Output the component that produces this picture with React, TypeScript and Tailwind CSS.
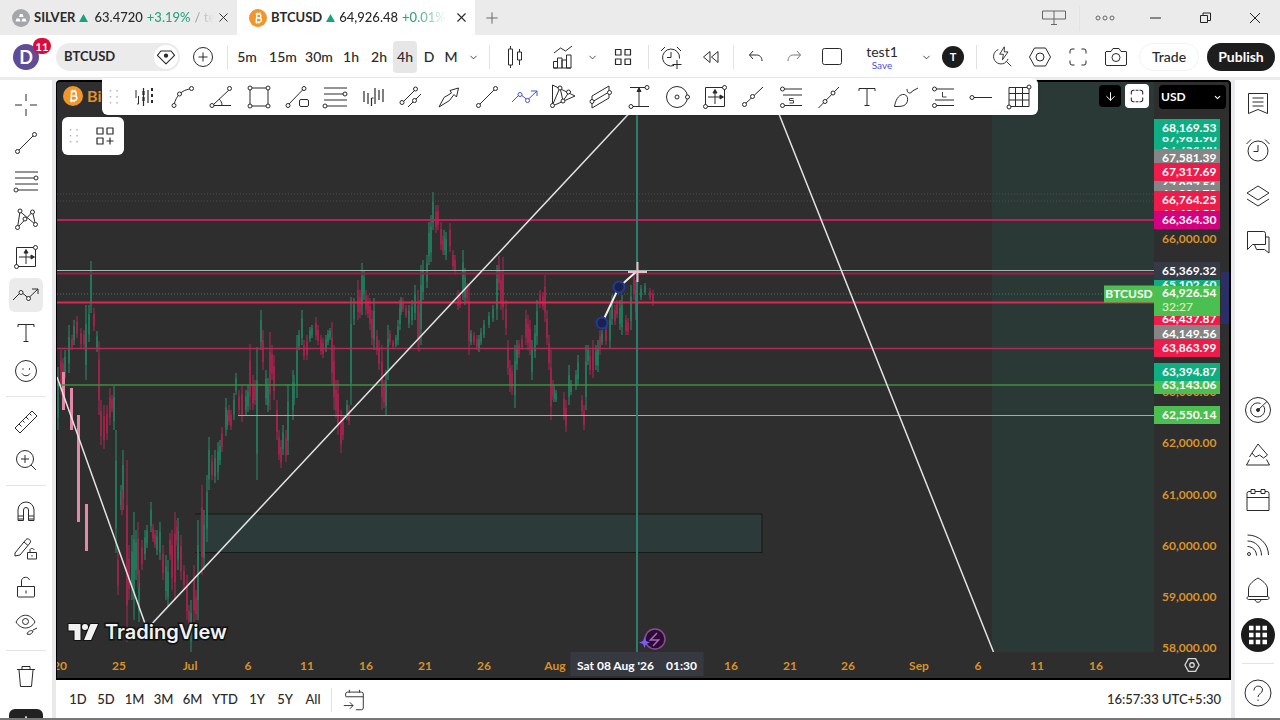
import type { ReactNode } from "react";
import { ArrowDown, ChevronDown, Plus, X } from "lucide-react";

const Icon = ({ children, size = 28, className = "" }: { children: ReactNode; size?: number; className?: string }) => (
  <svg
    viewBox="0 0 28 28"
    width={size}
    height={size}
    fill="none"
    stroke="currentColor"
    strokeWidth={1}
    strokeLinejoin="round"
    className={`shrink-0 ${className}`}
    aria-hidden="true"
  >
    {children}
  </svg>
);

const Dot = ({ x, y }: { x: number; y: number }) => <circle cx={x} cy={y} r={2} fill="#fff" />;

const icons: Record<string, ReactNode> = {
  cross: <path d="M14 3v7M14 18v7M3 14h7M18 14h7" />,
  trend: (
    <>
      <path d="M6 22 22 6" />
      <Dot x={5.5} y={22.5} />
      <Dot x={22.5} y={5.5} />
    </>
  ),
  fib: (
    <>
      <path d="M3 5h23M3 11h20M3 17h23M5 23h21" />
      <Dot x={24} y={11} />
      <Dot x={4} y={23} />
    </>
  ),
  pattern: (
    <>
      <path d="M5.5 22.5 8 6.5 23.5 19.5 20.5 7 5.5 22.5" />
      <Dot x={5.5} y={22.5} />
      <Dot x={8} y={6} />
      <Dot x={13} y={14} />
      <Dot x={20.5} y={7} />
      <Dot x={23.5} y={19.5} />
    </>
  ),
  position: (
    <>
      <path d="M4.5 4.5h19v19h-19zM14 21V8M7 14h13" />
      <path d="m12 10 2-3.5 2 3.5zM19 12l3.5 2-3.5 2z" fill="currentColor" />
      <Dot x={23.5} y={4.5} />
      <Dot x={4.5} y={23.5} />
    </>
  ),
  path: (
    <>
      <path d="m1 19 8-8 7.5 6L26 8M20 8h6v5" />
      <Dot x={9} y={11.5} />
      <Dot x={16.5} y={17.5} />
    </>
  ),
  text: <path d="M6 8V5.5h16V8M14 5.5v17M11.5 22.5h5" />,
  smile: (
    <>
      <circle cx={14} cy={14} r={10.5} />
      <path d="M10 16.5c2 3 6 3 8 0" />
      <path d="M10.5 12h1M17 12h1" strokeWidth={1.5} />
    </>
  ),
  ruler: <path d="M3 20 20 3l5 5L8 25zM7 16l2.5 2.5M10.5 12.5l2 2M14 9l2.5 2.5M17.5 5.5l2 2" />,
  zoom: (
    <>
      <circle cx={13} cy={13} r={8.5} />
      <path d="m19 19 5 5M13 9v8M9 13h8" />
    </>
  ),
  magnet: <path d="M6 23.5V13a8 8 0 0 1 16 0v10.5h-5.5V13a2.5 2.5 0 0 0-5 0v10.5zM6 19h5.5M16.5 19H22M6 22h5.5M16.5 22H22" />,
  pencilLock: (
    <>
      <path d="M3 18 14 4.5c2-2 6 1 4 3.5L8 20l-5 1zM12 7l4 3.5" />
      <path d="M15.5 17.5h9V24h-9zM18 17.5V15c0-2 4-2 4 0M20 20v1.5" />
    </>
  ),
  lock: <path d="M5.5 13.5h17v9.5a1 1 0 0 1-1 1h-15a1 1 0 0 1-1-1zM9.5 13.5V8c0-4.5 7-5 8-1M14 17.5v3" />,
  eye: (
    <>
      <path d="M4 11c5-9 14-9 19 0-5 8-14 8-19 0z" />
      <circle cx={13.5} cy={10.5} r={3} />
      <path d="M15 23c1-3 4-4 6-3-1 3-3 4-6 3zM21 19l4-2" />
    </>
  ),
  trash: <path d="M5 7.5h18M10 7.5V4.5h8v3M7 8l1.5 16.5h11L21 8" />,
  curve: (
    <>
      <path d="M5 22C7 13 12 7 23 5.5" />
      <Dot x={5} y={22.5} />
      <Dot x={10.5} y={11} />
      <Dot x={22.5} y={5.5} />
    </>
  ),
  angle: (
    <>
      <path d="M23 6 5.5 22.5H24M12 16c2 1.5 3 4 3 6.5" />
      <Dot x={22.5} y={5.5} />
      <Dot x={5} y={22.5} />
    </>
  ),
  rect: (
    <>
      <path d="M5 5h18v18H5z" />
      <Dot x={5} y={5} />
      <Dot x={23} y={5} />
      <Dot x={5} y={23} />
      <Dot x={23} y={23} />
    </>
  ),
  lineBox: (
    <>
      <path d="M5 22 21 5.5" />
      <rect x={16.5} y={16.5} width={9} height={7} rx={1.5} />
      <Dot x={5} y={22.5} />
      <Dot x={21} y={5.5} />
    </>
  ),
  barsDown: (
    <>
      <path d="M5 7v8M7.5 13v8H6" />
      <path d="M12.5 5v18M12.5 8v4M12.5 15v5M17 7v13M17 10v3" strokeWidth={1.2} />
      <path d="M12.5 8v12" strokeWidth={2.2} strokeDasharray="4 2" />
      <path d="M21 5v18" strokeWidth={2} strokeDasharray="3 3" />
    </>
  ),
  barsPattern: <path d="M5 8v11M9 10v11M12.500 15v8M12.500 15h2M16 5v16M20 7v10M24 6v13M5 11v5M9 13v5M16 9v7M20 9v5M24 9v6" strokeWidth={1.2} />,
  disjoint: (
    <>
      <path d="M6 19 18 7M11 24 24 11" />
      <Dot x={5} y={19.5} />
      <Dot x={18.5} y={6} />
      <Dot x={17.5} y={17.5} />
    </>
  ),
  arrow: <path d="M4 24 9 14.5 16.5 10 15 7.5 23.5 5 21.5 14 19 11.5 14.5 17.5z" />,
  ray: (
    <>
      <path d="M5 22 24 4" />
      <Dot x={5.5} y={21.5} />
      <Dot x={13.5} y={13.5} />
    </>
  ),
  triangle: (
    <>
      <path d="M3.5 2v21L26 13zM3.5 22 11 4.5 14 18 20 9" />
      <Dot x={3.5} y={22.5} />
      <Dot x={11} y={5} />
      <Dot x={14} y={18} />
      <Dot x={19.5} y={9} />
    </>
  ),
  channel: (
    <>
      <path d="M5 13 22 3v12L5 25zM5 19 22 9" />
      <Dot x={5} y={18.5} />
      <Dot x={22.5} y={9.5} />
    </>
  ),
  range: (
    <>
      <path d="M5 4.5h18M14 5v18M6 23.5h18" />
      <path d="m12 8.5 2-3.5 2 3.5z" fill="currentColor" />
      <Dot x={22} y={4.5} />
      <Dot x={6} y={23.5} />
    </>
  ),
  circle: (
    <>
      <circle cx={14} cy={14} r={10.5} />
      <circle cx={14} cy={14} r={2} />
      <Dot x={24.5} y={14} />
    </>
  ),
  short: (
    <>
      <path d="M6 6h19M6 12h19M6 22.5h19" />
      <path d="M16.5 15.5h-4v2h4v2.5h-4" strokeWidth={0.9} />
      <Dot x={5.5} y={6} />
      <Dot x={5.5} y={22.5} />
    </>
  ),
  extended: (
    <>
      <path d="M3.5 25 24 4" />
      <Dot x={10} y={18.5} />
      <Dot x={18} y={10} />
    </>
  ),
  brush: (
    <>
      <path d="M3.500 23.500c1-6 3.500-11 8-12 5-1 7 6 3 10-2 2-6 2-11 2z" />
      <path d="M16 6c0 5 4 5 5.500 2L27 5" />
    </>
  ),
  long: (
    <>
      <path d="M6 6h19M6 17h19M6 22.5h19" />
      <path d="M13.5 9v5h4" strokeWidth={0.9} />
      <Dot x={5.5} y={6} />
      <Dot x={5.5} y={22.5} />
    </>
  ),
  horizontal: (
    <>
      <path d="M6 14.5h19" />
      <Dot x={5} y={14.5} />
    </>
  ),
  grid: (
    <>
      <path d="M4 4.5h20v19H4zM10.5 4.5v19M17.5 4.5v19M4 10.5h20M4 17h20" />
      <Dot x={24} y={4} />
      <Dot x={4} y={24} />
    </>
  ),
  candles: <path d="M8.500 6h4v16h-4zM10.500 3v3M10.500 22v3M17.500 9h4v8h-4zM19.500 6v3M19.500 17v5" />,
  indicators: <path d="M6 10 12.5 5l5 3L24 3M5.5 25v-6.5h4V25zM9.5 25V15h4.5v10M14 25v-8h4.5v8M18.5 25V12H23v13zM5.5 25H23" />,
  layouts: <path d="M6.500 6.500h5.500v5.500H6.500zM16 6.500h5.500v5.500H16zM6.500 16h5.500v5.500H6.500zM16 16h5.500v5.500H16z" strokeWidth={1.200} />,
  addLayout: <path d="M6 6h6v6H6zM16 6h6v6h-6zM6 16h6v6H6zM19 15.5v7M15.5 19h7" strokeWidth={1.200} />,
  alert: <path d="M17 22.5a8.5 8.5 0 1 1 5.5-7M14 9v5.5h-4M4 8l4-4M20 4l4 4M20 17v9M15.5 21.5h9" />,
  replay: <path d="M13 8.5v11L6.5 14zM21 8.5v11L14.500 14z" />,
  undo: <path d="M11 8 7.500 12l3.500 4M7.500 12h7c3.500 0 5.500 2.500 5.500 6" />,
  redo: <path d="m17 8 3.500 4-3.500 4M20.500 12h-7C10 12 8 14.500 8 18" stroke="#777" />,
  square: <rect x={4.5} y={5.5} width={19} height={16} rx={2} />,
  quickSearch: <path d="M10 6a8 8 0 1 0 10.5 10M19 19l5 5M16.5 3 11.5 11h4L14.5 17l6-8.5h-4z" />,
  hexagon: (
    <>
      <path d="M8.5 5h11l5 9-5 9h-11l-5-9z" />
      <circle cx={14} cy={14} r={4} />
    </>
  ),
  fullscreen: <path d="M6 10.5V8a2 2 0 0 1 2-2h2.5M17.5 6H20a2 2 0 0 1 2 2v2.5M22 17.5V20a2 2 0 0 1-2 2h-2.5M10.5 22H8a2 2 0 0 1-2-2v-2.5" />,
  maximize: <path d="M6 12V9a3 3 0 0 1 3-3h1.500M12 6h4M17.500 6H19a3 3 0 0 1 3 3v3M22 16v3a3 3 0 0 1-3 3h-1.500M16 22h-4M10.500 22H9a3 3 0 0 1-3-3v-3" strokeWidth={1.500} />,
  camera: (
    <>
      <path d="M4 8.5h5l2-3h6l2 3h5a.5.5 0 0 1 .5.5v12a1.5 1.5 0 0 1-1.5 1.5H5A1.5 1.5 0 0 1 3.5 21V9z" />
      <circle cx={14} cy={14.5} r={4} />
    </>
  ),
  watchlist: <path d="M4.5 3.5h19v20L14 19.5l-9.5 4zM8.5 8h11M8.5 12h11M8.5 16h11" />,
  alarm: (
    <>
      <circle cx={14} cy={15} r={10} />
      <path d="M14 9v6.5H9.5M2.5 8 7 3.5M21 3.5 25.5 8" />
    </>
  ),
  layers: <path d="m14 4 11 7-11 7-11-7zM3 17l11 7 11-7" />,
  chat: <path d="M3.5 3.5h16a2 2 0 0 1 2 2v11h-13l-5 5zM21.5 9H25v16l-4.5-3.5h-8l-2-5" />,
  target: (
    <>
      <circle cx={14} cy={14} r={12.5} />
      <path d="M19.5 10a7 7 0 1 1-3-2.5M14 14l9-8.5" />
      <circle cx={14} cy={14} r={1.5} fill="currentColor" />
    </>
  ),
  idea: <path d="m14 3 9.5 11-4 3-4-3-4 2L8 12zM8 12l-2.5 4M5.5 18.5 2.5 24h23l-3-5.5" />,
  calendar: <path d="M5 5.5h2M11 5.5h6M21 5.5h2a2 2 0 0 1 2 2v17H3v-17a2 2 0 0 1 2-2M3 11.5h22M7 3.5h4v4H7zM17 3.5h4v4h-4z" />,
  feed: (
    <>
      <circle cx={5} cy={23} r={1.5} />
      <path d="M3.5 15.5c5 0 9 4 9 9M3.5 10c8 0 14 6 14 14.5M3.5 4c12 0 21 9 21 20" />
    </>
  ),
  bell: <path d="M4.5 23.5c-2 0-2-3 0-3V13c0-5 6-9 9.5-11 3.5 2 9.5 6 9.5 11v7.5c2 0 2 3 0 3zM11 24c1 3 5 3 6 0M4.5 20.5h19" />,
  help: (
    <>
      <circle cx={14} cy={14} r={13} />
      <path d="M10 11.5c0-6 8.5-5.5 8.5-.5 0 3.5-4.5 3.5-4.5 7M14 20.5v1.5" />
    </>
  ),
  goTo: <path d="M5 10V7.5a2 2 0 0 1 2-2h15a2 2 0 0 1 2 2v15a2 2 0 0 1-2 2h-6M5 10.5h19M9 3v3M20 3v3M3 20h10M9.5 16.5 13 20l-3.5 3.5" />,
};

const drawingTools = [
  "barsDown", "curve", "angle", "rect", "lineBox", "fib", "barsPattern", "disjoint",
  "arrow", "trend", "path", "triangle", "channel", "range", "circle", "position",
  "ray", "short", "extended", "text", "brush", "long", "horizontal", "grid",
];

const leftTools = [
  ["cross", "trend", "fib", "pattern", "position", "path", "text", "smile"],
  ["ruler", "zoom"],
  ["magnet", "pencilLock", "lock", "eye"],
  ["trash"],
];

const intervals = [
  { label: "5m", width: "w-9" },
  { label: "15m", width: "w-9" },
  { label: "30m", width: "w-9" },
  { label: "1h", width: "w-7" },
  { label: "2h", width: "w-7" },
  { label: "4h", width: "w-6" },
  { label: "D", width: "w-6" },
  { label: "M", width: "w-5" },
];

const TEAL = "bg-[#0fae82]";
const RED = "bg-[#ee1c4b]";
const GRAY = "bg-[#858585]";
const GREEN = "bg-[#4bbf50]";

// later entries are painted over earlier ones
const priceTags = [
  { price: 67754.9, bg: TEAL },
  { price: 67981.9, bg: TEAL },
  { price: 68169.53, bg: TEAL },
  { price: 67581.39, bg: GRAY },
  { price: 67037.51, bg: GRAY },
  { price: 66886.78, bg: GRAY },
  { price: 67317.69, bg: RED },
  { price: 66484.5, bg: RED },
  { price: 66764.25, bg: RED },
  { price: 66364.3, bg: "bg-[#d4007f]" },
  { price: 65102.6, bg: TEAL },
  { price: 65369.32, bg: "bg-[#363a45]" },
  { price: 64437.87, bg: RED },
  { price: 64149.56, bg: GRAY },
  { price: 63863.99, bg: RED },
  { price: 63143.06, bg: GREEN },
  { price: 63394.87, bg: TEAL },
  { price: 62550.14, bg: GREEN },
];

const gridPrices = [66000, 63000, 62000, 61000, 60000, 59000, 58000];

const timeLabels: [string, number][] = [
  ["20", 60], ["25", 119], ["Jul", 190], ["6", 248], ["11", 307], ["16", 366], ["21", 425], ["26", 484],
  ["Aug", 555], ["16", 731], ["21", 790], ["26", 848], ["Sep", 919], ["6", 978], ["11", 1037], ["16", 1096],
];

const TOP = 82;
const LEFT = 57;
const PLOT_W = 1097;
const PLOT_H = 570;

const priceTop = (price: number) => `${((239 + (66000 - price) * 0.05112 - TOP) / PLOT_H) * 100}%`;
const format = (price: number) => price.toLocaleString("en-US", { minimumFractionDigits: 2 });

// x, high, low
const up: [number, number, number][] = [
  [58, 367, 430], [65, 350, 378], [69, 325, 373], [74, 320, 345], [86, 305, 380], [89, 305, 342], [91, 261, 313],
  [97, 331, 352], [114, 386, 430], [116, 430, 553], [121, 485, 510], [123, 450, 510], [132, 535, 600], [134, 512, 620],
  [136, 530, 580], [139, 570, 622], [145, 530, 560], [147, 525, 548], [151, 502, 532], [157, 530, 555], [160, 522, 560],
  [166, 555, 600], [168, 560, 606], [178, 518, 570], [191, 600, 652], [198, 520, 620], [204, 510, 570], [207, 475, 542],
  [209, 437, 490], [215, 450, 483], [218, 442, 480], [220, 440, 465], [226, 398, 436], [227, 410, 430], [234, 393, 420],
  [236, 373, 395], [246, 390, 415], [248, 385, 412], [257, 347, 480], [261, 310, 350], [266, 370, 405], [268, 378, 412],
  [283, 425, 455], [288, 384, 455], [293, 370, 420], [294, 375, 405], [297, 335, 398], [299, 330, 350], [302, 310, 345],
  [310, 327, 342], [312, 325, 338], [326, 335, 352], [328, 330, 345], [330, 328, 340], [347, 400, 420], [351, 297, 405],
  [354, 298, 325], [362, 263, 315], [364, 270, 300], [374, 298, 350], [386, 370, 415], [388, 325, 380], [396, 335, 347],
  [398, 320, 345], [400, 300, 330], [401, 297, 315], [409, 305, 328], [412, 300, 325], [415, 285, 320], [421, 265, 345],
  [423, 260, 300], [427, 255, 288], [429, 222, 265], [431, 215, 262], [433, 192, 230], [444, 230, 255], [446, 232, 260],
  [463, 250, 300], [465, 268, 305], [471, 330, 345], [479, 335, 352], [481, 328, 345], [484, 320, 338], [489, 312, 328],
  [493, 305, 322], [497, 265, 320], [515, 345, 408], [517, 340, 370], [532, 340, 380], [535, 325, 358], [537, 300, 345],
  [554, 385, 402], [556, 390, 402], [569, 365, 405], [571, 380, 395], [576, 370, 390], [578, 355, 385], [586, 345, 410],
  [588, 345, 365], [596, 345, 370], [598, 340, 372], [602, 330, 345], [610, 310, 348], [612, 295, 325], [620, 300, 330],
  [622, 295, 335], [631, 285, 330], [636, 280, 320], [641, 285, 300], [645, 283, 295],
];
const down: [number, number, number][] = [
  [61, 350, 395], [63, 358, 380], [72, 335, 350], [77, 316, 338], [81, 328, 348], [84, 330, 348], [94, 308, 331],
  [99, 341, 415], [101, 400, 445], [104, 405, 449], [107, 405, 440], [110, 388, 425], [112, 395, 412], [118, 548, 595],
  [122, 490, 515], [127, 460, 642], [129, 545, 600], [138, 522, 588], [142, 540, 570], [153, 524, 542], [155, 530, 548],
  [163, 545, 580], [170, 533, 560], [172, 530, 590], [175, 512, 600], [177, 520, 545], [181, 535, 580], [184, 565, 590],
  [187, 575, 620], [189, 605, 628], [194, 565, 622], [196, 590, 620], [202, 485, 575], [212, 455, 480], [222, 427, 452],
  [229, 405, 425], [231, 410, 430], [239, 390, 415], [242, 385, 422], [250, 344, 410], [253, 375, 410], [255, 380, 405],
  [263, 330, 370], [270, 332, 410], [272, 345, 380], [274, 355, 400], [277, 400, 440], [279, 430, 460], [281, 440, 468],
  [286, 430, 462], [304, 340, 360], [307, 335, 360], [316, 317, 340], [318, 325, 345], [321, 335, 355], [323, 338, 358],
  [332, 322, 385], [334, 345, 410], [336, 380, 418], [338, 380, 435], [341, 410, 453], [343, 415, 440], [349, 405, 425],
  [358, 280, 320], [360, 290, 318], [366, 290, 315], [368, 295, 318], [370, 298, 330], [372, 310, 345], [377, 330, 355],
  [379, 340, 370], [382, 345, 410], [384, 380, 408], [390, 330, 345], [393, 340, 348], [403, 298, 312], [406, 305, 318],
  [418, 290, 350], [419, 300, 352], [436, 205, 233], [438, 205, 230], [441, 222, 250], [443, 235, 255], [450, 223, 252],
  [453, 250, 270], [455, 255, 275], [458, 290, 310], [460, 292, 308], [467, 283, 302], [469, 285, 355], [474, 332, 345],
  [477, 335, 350], [499, 256, 290], [501, 270, 310], [503, 257, 320], [506, 300, 335], [508, 340, 375], [510, 360, 392],
  [512, 365, 395], [519, 340, 358], [522, 335, 350], [526, 310, 345], [528, 315, 350], [530, 320, 355], [540, 290, 308],
  [543, 292, 310], [545, 275, 322], [547, 310, 345], [549, 335, 370], [551, 350, 420], [553, 380, 400], [564, 392, 420],
  [566, 400, 432], [582, 395, 415], [584, 405, 430], [590, 350, 375], [593, 340, 378], [600, 330, 355], [606, 325, 345],
  [615, 305, 325], [617, 300, 318], [626, 315, 335], [628, 318, 335], [634, 270, 300], [650, 288, 300], [653, 290, 306],
];

const wicks = (bars: [number, number, number][]) => bars.map(([x, high, low]) => `M${x} ${high}V${low}`).join("");
const bodies = (bars: [number, number, number][]) =>
  bars.map(([x, high, low]) => `M${x} ${high + (low - high) * 0.25}V${low - (low - high) * 0.2}`).join("");

const Divider = () => <div className="h-6 w-px shrink-0 bg-[#e2e2e2]" />;

const ToolButton = ({ name, label, width, size = 28 }: { name: string; label: string; width: string; size?: number }) => (
  <button aria-label={label} className={`flex h-full shrink-0 items-center justify-center ${width}`}>
    <Icon size={size}>{icons[name]}</Icon>
  </button>
);

const Coin = ({ size }: { size: number }) => (
  <svg viewBox="0 0 20 20" width={size} height={size} className="shrink-0" aria-hidden="true">
    <circle cx={10} cy={10} r={10} fill="#f0962a" />
    <path
      d="M7.5 5.5h3.5c3 0 3 4 .5 4.3 3.2.2 3.2 4.7-.5 4.7H7M8.7 5.5 8 14.5M8 10h4M9.5 3.8v1.7M12 3.8v1.7M8.5 14.5v1.7M11 14.5v1.7"
      fill="none"
      stroke="#fff"
      strokeWidth={1.5}
    />
  </svg>
);

const UpTriangle = () => (
  <svg viewBox="0 0 9 8" width={9} height={8} className="ml-1 shrink-0" aria-hidden="true">
    <path d="M4.500 0 9 8H0z" fill="#16a57a" />
  </svg>
);

const TabBar = () => (
  <div className="flex h-[35px] shrink-0 bg-[#ebebeb]">
    <div className="flex w-[237px] shrink-0 items-center pl-3 pr-1.5">
      <svg viewBox="0 0 18 18" width={18} height={18} className="shrink-0" aria-hidden="true">
        <circle cx={9} cy={9} r={9} fill="#a5a6aa" />
        <path d="m7 8 1-3h2.5l1 3zM3.5 12.5l1-3h3l1 3zM9.5 12.5l1-3h3l1 3z" fill="#fff" />
      </svg>
      <span className="ml-1 text-[13px] font-bold">SILVER</span>
      <UpTriangle />
      <div className="ml-1.5 flex w-[120px] gap-1 overflow-hidden whitespace-nowrap text-[13px] font-medium [mask-image:linear-gradient(to_right,#000_80%,transparent)]">
        <span>63.4720</span>
        <span className="text-[#2ba37f]">+3.19%</span>
        <span className="text-[#888]">/ te</span>
      </div>
      <button aria-label="Close SILVER tab" className="ml-auto">
        <X size={15} strokeWidth={1.5} />
      </button>
    </div>
    <div className="flex w-[238px] shrink-0 items-center bg-white pl-3 pr-1.5">
      <Coin size={18} />
      <span className="ml-1 text-[13px] font-bold">BTCUSD</span>
      <UpTriangle />
      <div className="ml-1 flex w-[108px] gap-1 overflow-hidden whitespace-nowrap text-[13px] font-medium [mask-image:linear-gradient(to_right,#000_70%,transparent)]">
        <span>64,926.48</span>
        <span className="text-[#2ba37f]">+0.01%</span>
      </div>
      <button aria-label="Close BTCUSD tab" className="ml-auto">
        <X size={15} strokeWidth={1.8} />
      </button>
    </div>
    <button aria-label="New tab" className="flex w-[34px] items-center justify-center text-[#666]">
      <Plus size={18} strokeWidth={1.3} />
    </button>
    <div className="ml-auto flex items-center text-[#666]">
      <button aria-label="Display" className="flex w-[50px] justify-center">
        <Icon>
          <path d="M2.5 7h23v8h-23zM14 7v13M11 20.5h6" />
        </Icon>
      </button>
      <Divider />
      <button aria-label="More" className="flex w-[50px] justify-center">
        <Icon>
          <circle cx={7} cy={14} r={2} />
          <circle cx={14} cy={14} r={2} />
          <circle cx={21} cy={14} r={2} />
        </Icon>
      </button>
      <button aria-label="Minimize" className="flex w-[50px] justify-center text-[#222]">
        <Icon>
          <path d="M9 14h11" />
        </Icon>
      </button>
      <button aria-label="Restore" className="flex w-[50px] justify-center text-[#222]">
        <Icon>
          <path d="M9.5 11.5h7v7h-7zM12 11.5V9h7.5v7.5h-3" />
        </Icon>
      </button>
      <button aria-label="Close window" className="flex w-[50px] justify-center text-[#222]">
        <Icon>
          <path d="m9 9 10 10M19 9 9 19" />
        </Icon>
      </button>
    </div>
  </div>
);

const Header = () => (
  <header className="flex h-[45px] shrink-0 items-center border-b-3 border-[#ebebeb] bg-white pt-0.5 pr-[5px]">
    <div className="w-14 shrink-0 pl-[13px]">
      <div className="relative flex size-[26px] items-center justify-center rounded-full bg-[#5f4b97] text-lg font-bold text-white">
        D
        <span className="absolute -right-3 -top-1.5 flex h-4 w-[18px] items-center justify-center rounded-full bg-[#dc0b3c] text-[11px] leading-none">
          11
        </span>
      </div>
    </div>
    <button className="flex h-7 w-31 shrink-0 items-center justify-between rounded-full bg-[#ebebeb] pl-2 pr-0.5 text-[13px] font-bold">
      BTCUSD
      <span className="flex size-6 items-center justify-center rounded-full bg-white">
        <Icon size={24}>
          <path d="M8 7h12l4 5L14 22 4 12z" strokeWidth={1.3} />
          <circle cx={14} cy={12.5} r={2.5} fill="currentColor" stroke="none" />
        </Icon>
      </span>
    </button>
    <button aria-label="Compare symbols" className="flex w-[46px] shrink-0 justify-center">
      <Icon>
        <circle cx={14} cy={14} r={9.5} />
        <path d="M14 9.5v9M9.5 14h9" />
      </Icon>
    </button>
    <div className="mx-px">
      <Divider />
    </div>
    {intervals.map(({ label, width }) => (
      <button
        key={label}
        className={`h-8 shrink-0 rounded text-sm font-medium ${width} ${label === "4h" ? "bg-[#e6e6e6]" : ""}`}
      >
        {label}
      </button>
    ))}
    <button aria-label="More intervals" className="mr-1 flex w-6 shrink-0 justify-center">
      <ChevronDown size={11} strokeWidth={1.8} />
    </button>
    <Divider />
    <ToolButton name="candles" label="Bar style" width="w-12" />
    <ToolButton name="indicators" label="Indicators" width="w-12" />
    <button aria-label="Indicator templates" className="flex w-3 shrink-0 justify-center">
      <ChevronDown size={11} strokeWidth={1.8} />
    </button>
    <ToolButton name="layouts" label="Layouts" width="w-[50px]" />
    <Divider />
    <ToolButton name="alert" label="Create alert" width="w-11" />
    <ToolButton name="replay" label="Replay" width="w-9" />
    <div className="ml-1">
      <Divider />
    </div>
    <ToolButton name="undo" label="Undo" width="w-11" />
    <ToolButton name="redo" label="Redo" width="w-8" />
    <ToolButton name="square" label="Single layout" width="w-11" />
    <button className="flex w-14 shrink-0 flex-col items-center">
      <span className="text-sm leading-4">test1</span>
      <span className="text-[10px] leading-[10px] text-[#4a50e0]">Save</span>
    </button>
    <button aria-label="Manage layouts" className="flex w-8 shrink-0 justify-center">
      <ChevronDown size={11} strokeWidth={1.8} />
    </button>
    <div className="mr-3 flex size-[22px] shrink-0 items-center justify-center rounded-full bg-[#1c1c1c] text-[11px] font-bold text-white">
      T
    </div>
    <Divider />
    <div className="ml-auto flex h-full items-center">
      <ToolButton name="quickSearch" label="Quick search" width="w-[38px]" size={26} />
      <ToolButton name="hexagon" label="Settings" width="w-[38px]" />
      <ToolButton name="fullscreen" label="Fullscreen" width="w-[38px]" />
      <ToolButton name="camera" label="Snapshot" width="w-[38px]" />
      <button className="ml-1 h-7 w-15 rounded-full border border-[#f3f3f3] text-sm font-medium">Trade</button>
      <button className="ml-2 h-7 w-17 rounded-full bg-[#1d1d1d] text-sm font-bold text-white">Publish</button>
    </div>
  </header>
);

const LeftToolbar = () => (
  <aside className="flex w-[52px] shrink-0 flex-col items-center overflow-hidden pt-1.5">
    {leftTools.map((group, i) => (
      <div key={group[0]} className="flex w-full shrink-0 flex-col items-center">
        {i > 0 && <div className="my-1.5 h-px w-10 bg-[#e4e4e4]" />}
        {group.map((name) => (
          <button key={name} aria-label={name} className="flex h-[38px] items-center">
            <span
              className={`flex size-[34px] items-center justify-center rounded-md ${name === "path" ? "bg-[#ebebeb]" : ""}`}
            >
              <Icon>{icons[name]}</Icon>
            </span>
          </button>
        ))}
      </div>
    ))}
    <button aria-label="Collapse" className="mt-3.5 flex h-8 w-[34px] shrink-0 justify-center rounded-md bg-[#222] pt-1.5 text-white">
      <Icon size={14}>
        <path d="m14 2-6 14h12z" fill="#fff" />
      </Icon>
    </button>
  </aside>
);

const RightToolbar = () => (
  <aside className="flex w-[45px] shrink-0 flex-col items-center justify-between overflow-hidden pt-px pb-0.5">
    <div>
      {["watchlist", "alarm", "layers", "chat"].map((name) => (
        <button key={name} aria-label={name} className="flex h-[46px] items-center justify-center">
          <Icon>{icons[name]}</Icon>
        </button>
      ))}
    </div>
    <div className="flex flex-col items-center">
      {["target", "idea", "calendar", "feed", "bell"].map((name) => (
        <button key={name} aria-label={name} className="flex h-[45px] items-center justify-center">
          <Icon>{icons[name]}</Icon>
        </button>
      ))}
      <button aria-label="Products" className="flex h-[45px] items-center">
        <svg viewBox="0 0 34 34" width={34} height={34} aria-hidden="true">
          <circle cx={17} cy={17} r={17} fill="#1c1c1c" />
          <path d="M8 10h18M8 17h18M8 24h18" stroke="#fff" strokeWidth={4.5} strokeDasharray="4.5 2.25" />
        </svg>
      </button>
      <div className="mt-1.5 h-px w-8 bg-[#e4e4e4]" />
      <button aria-label="Help" className="mt-1.5 flex h-[46px] items-center">
        <Icon>{icons.help}</Icon>
      </button>
    </div>
  </aside>
);

const Plot = () => (
  <svg
    viewBox={`${LEFT} ${TOP} ${PLOT_W} ${PLOT_H}`}
    preserveAspectRatio="none"
    className="absolute inset-0 size-full"
    fill="none"
    aria-hidden="true"
  >
    <rect x={992} y={82} width={162} height={570} fill="#2b3936" />
    <path d="M57 194H1154M57 201H1154" stroke="#4c4f4d" strokeDasharray="1 2" />
    <rect x={200} y={514} width={562} height={38} fill="#2c3b39" />
    <path d="M195 514H762V552.5H195" stroke="#151918" />
    <path d="M57 294H1154" stroke="#55705a" strokeDasharray="1 2" />
    <path d={wicks(up)} stroke="#2a7059" strokeWidth={1.5} />
    <path d={bodies(up)} stroke="#24765a" strokeWidth={2} />
    <path d={wicks(down)} stroke="#87294a" strokeWidth={1.5} />
    <path d={bodies(down)} stroke="#9c2349" strokeWidth={2} />
    <path d="M63.5 372V410M71.5 388V430M78.5 415V522M86.5 504V551" stroke="#e588a8" strokeWidth={3} />
    <path d="M57 220H1154" stroke="#bd1e5c" strokeWidth={2.2} />
    <path d="M57 270.5H1154" stroke="#9dbab2" />
    <path d="M57 273.5H1154" stroke="#a01c48" strokeWidth={1.8} />
    <path d="M57 302.5H1154" stroke="#dc2754" strokeWidth={2.2} />
    <path d="M57 348.5H1154" stroke="#b02c58" strokeWidth={1.3} />
    <path d="M57 385H1154" stroke="#3c8f42" strokeWidth={1.6} />
    <path d="M238 415.5H1154" stroke="#a3aca8" />
    <path d="M57 377 147 629 637 105M775 104 993.5 652" stroke="#e3e3e3" strokeWidth={1.5} />
    <path d="M637 82V652" stroke="#2d7d6e" strokeWidth={2} />
    <path d="m602 323 17-36 18-16" stroke="#f0f0f0" strokeWidth={2} />
    <circle cx={602} cy={323} r={5.5} fill="#18224a" stroke="#1f3c9c" strokeWidth={2} />
    <circle cx={619} cy={287} r={5.5} fill="#18224a" stroke="#1f3c9c" strokeWidth={2} />
    <path d="M637.5 262V282M628 272H647" stroke="#f3b9c6" strokeWidth={2} />
    <circle cx={655} cy={639} r={10} fill="#2e0a38" stroke="#86508f" strokeWidth={1.5} />
    <path d="M657 633 650.5 640h8L653 646" stroke="#a06cb0" strokeWidth={1.6} />
    <path d="m644.5 637 1.5 4 4 1.5-4 1.5-1.5 4-1.5-4-4-1.5 4-1.5z" fill="#7a5cff" />
  </svg>
);

const Grip = () => (
  <svg viewBox="0 0 10 16" width={10} height={16} className="shrink-0" aria-hidden="true">
    <path d="M1.5 1v15M8 1v15" stroke="#b5b5b5" strokeWidth={1.5} strokeDasharray="1.5 4.5" />
  </svg>
);

const Chart = () => (
  <div className="flex min-h-0 flex-1 flex-col rounded-t border-2 border-l border-black bg-[#2e2e2e]">
    <div className="flex min-h-0 flex-1">
      <div className="relative flex-1">
        <Plot />
        <div className="absolute left-1.5 top-0.5 flex items-center gap-1 text-base font-bold text-[#e0912f]">
          <Coin size={20} />
          Bi
        </div>
        <div className="absolute -top-1 left-[45px] z-10 flex h-[37px] items-center rounded-b-md rounded-tr-md bg-white pl-[7px] shadow">
          <Grip />
          <div className="ml-[7px] flex">
            {drawingTools.map((name) => (
              <button
                key={name}
                aria-label={`Draw ${name}`}
                className={`flex w-[38px] items-center justify-center ${name === "path" ? "text-[#4150d8]" : ""}`}
              >
                <Icon>{icons[name]}</Icon>
              </button>
            ))}
          </div>
        </div>
        <div className="absolute left-[5px] top-[35px] flex h-[38px] w-[62px] items-center rounded-md bg-white pl-[7px]">
          <Grip />
          <button aria-label="Add layout" className="ml-3">
            <Icon>{icons.addLayout}</Icon>
          </button>
        </div>
        <div className="absolute right-[5px] top-0.5 flex items-center gap-1">
          <button aria-label="Scroll down" className="flex size-[22px] items-center justify-center rounded-sm bg-black text-white">
            <ArrowDown size={13} strokeWidth={1.8} />
          </button>
          <button aria-label="Maximize" className="flex size-6 items-center justify-center rounded bg-white">
            <Icon size={20}>{icons.maximize}</Icon>
          </button>
        </div>
        <span
          className="absolute right-0 flex h-[17px] w-[50px] -translate-y-1/2 items-center justify-center bg-[#4bbf50] text-xs font-bold text-white"
          style={{ top: priceTop(64926.54) }}
        >
          BTCUSD
        </span>
        <div className="absolute bottom-2 left-2.5 flex items-center gap-1.5">
          <svg viewBox="0 0 32 20" width={32} height={20} aria-hidden="true">
            <path
              d="M1.5 2h12v16h-6V8.5h-6zM18 2a3 3 0 1 1 0 6 3 3 0 0 1 0-6zM23.5 2H31l-7 16h-7z"
              fill="#f2f2f2"
              stroke="#111"
              strokeWidth={2}
              paintOrder="stroke"
            />
          </svg>
          <span className="font-['Inter'] text-xl font-semibold leading-6 text-[#f2f2f2] [-webkit-text-stroke:3px_#111] [paint-order:stroke_fill]">
            TradingView
          </span>
        </div>
      </div>
      <div className="relative w-[75px] shrink-0 text-xs font-bold text-white">
        <div className="relative z-10 ml-[5px] mr-[3px] mt-[3px]">
          <select aria-label="Currency" className="h-6 w-full appearance-none rounded bg-black pl-0.5 text-xs font-bold">
            <option>USD</option>
          </select>
          <ChevronDown size={9} strokeWidth={3} className="pointer-events-none absolute right-1 top-2" />
        </div>
        {gridPrices.map((price) => (
          <span
            key={price}
            className="absolute left-2 -translate-y-1/2 leading-4 text-[#d99228]"
            style={{ top: priceTop(price) }}
          >
            {format(price)}
          </span>
        ))}
        {priceTags.map(({ price, bg }) => (
          <span
            key={price}
            className={`absolute left-0 flex h-[18px] w-[66px] -translate-y-1/2 items-center pl-2 ${bg}`}
            style={{ top: priceTop(price) }}
          >
            {format(price)}
          </span>
        ))}
        <div
          className="absolute left-0 -mt-2 flex w-[66px] flex-col bg-[#4bbf50] pb-0.5 pl-2 leading-[14px]"
          style={{ top: priceTop(64926.54) }}
        >
          <span>{format(64926.54)}</span>
          <span className="font-medium text-[#e2f6c8]">32:27</span>
        </div>
        <div className="absolute right-0 h-[52px] w-2 bg-[#2b2f68]" style={{ top: priceTop(65350) }} />
      </div>
    </div>
    <div className="flex h-[26px] shrink-0 text-xs font-bold text-[#d99228]">
      <div className="relative flex-1 overflow-hidden">
        {timeLabels.map(([label, x]) => (
          <span
            key={x}
            className="absolute top-1.5 -translate-x-1/2 leading-4"
            style={{ left: `${((x - LEFT) / PLOT_W) * 100}%` }}
          >
            {label}
          </span>
        ))}
        <span
          className="absolute top-0 flex h-6 w-[133px] -translate-x-1/2 items-center justify-center gap-3 whitespace-nowrap bg-[#363a40] pt-1 text-white"
          style={{ left: `${((637 - LEFT) / PLOT_W) * 100}%` }}
        >
          <span>Sat 08 Aug '26</span>
          <span>01:30</span>
        </span>
      </div>
      <button aria-label="Axis settings" className="flex w-[75px] items-center justify-center text-[#d8d8d8]">
        <Icon size={18}>
          <path d="M8.5 4h11l5.5 10-5.5 10h-11L3 14z" strokeWidth={2} />
          <circle cx={14} cy={14} r={3.5} strokeWidth={2} />
        </Icon>
      </button>
    </div>
  </div>
);

const ranges = [
  { label: "1D", width: "w-7" },
  { label: "5D", width: "w-7" },
  { label: "1M", width: "w-[29px]" },
  { label: "3M", width: "w-[29px]" },
  { label: "6M", width: "w-[29px]" },
  { label: "YTD", width: "w-9" },
  { label: "1Y", width: "w-7" },
  { label: "5Y", width: "w-7" },
  { label: "All", width: "w-7" },
];

const BottomBar = () => (
  <div className="flex h-[38px] shrink-0 items-center pt-0.5 pl-2 pr-2.5 text-[13px] font-medium">
    {ranges.map(({ label, width }) => (
      <button key={label} className={`shrink-0 ${width}`}>
        {label}
      </button>
    ))}
    <div className="ml-1">
      <Divider />
    </div>
    <ToolButton name="goTo" label="Go to date" width="w-11" size={26} />
    <span className="ml-auto whitespace-nowrap">16:57:33 UTC+5:30</span>
  </div>
);

const App = () => (
  <div className="flex h-screen flex-col overflow-hidden border-b-2 border-[#777] bg-white font-['Lato',sans-serif] text-[#2a2a2a]">
    <TabBar />
    <Header />
    <div className="flex min-h-0 flex-1">
      <LeftToolbar />
      <div className="w-1 shrink-0 bg-[#e9e9ec]" />
      <main className="flex min-w-0 flex-1 flex-col">
        <Chart />
        <BottomBar />
      </main>
      <div className="w-1 shrink-0 bg-[#e9e9ec]" />
      <RightToolbar />
    </div>
  </div>
);

export default App;
